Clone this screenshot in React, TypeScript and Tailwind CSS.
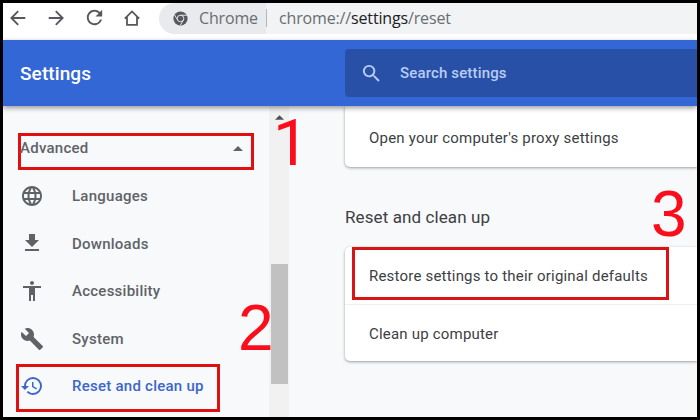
import React from "react";
import {
  MdAccessibility,
  MdBuild,
  MdHistory,
  MdLanguage,
  MdRefresh,
  MdSearch,
} from "react-icons/md";

function DownloadIcon({ className = "" }: { className?: string }) {
  return (
    <svg viewBox="0 0 24 24" className={className} fill="currentColor">
      <path d="M19 9h-4V3H9v6H5l7 7 7-7zM5 18v2h14v-2H5z" />
    </svg>
  );
}

const navItems = [
  { label: "Languages", icon: MdLanguage },
  { label: "Downloads", icon: DownloadIcon },
  { label: "Accessibility", icon: MdAccessibility },
  { label: "System", icon: MdBuild },
  { label: "Reset and clean up", icon: MdHistory, active: true },
];

function ArrowIcon({ className = "" }: { className?: string }) {
  return (
    <svg
      viewBox="0 0 16 16"
      className={`h-4 w-4 shrink-0 ${className}`}
      fill="none"
      stroke="#55585c"
      strokeWidth="1.9"
    >
      <path d="M15.3 8H1.5M8.2 1.2L1.4 8l6.8 6.8" />
    </svg>
  );
}

function HomeIcon() {
  return (
    <svg
      viewBox="0 0 16 16"
      className="ml-[18px] h-4 w-4 shrink-0"
      fill="none"
      stroke="#55585c"
      strokeWidth="1.8"
    >
      <path d="M.8 8.6L8 1.4l7.2 7.2M3 6.8v8.1h10V6.8" />
    </svg>
  );
}

function ChromeIcon() {
  return (
    <svg viewBox="0 0 16 16" className="h-[15px] w-[15px] shrink-0">
      <circle cx="8" cy="8" r="7.6" fill="#55585c" />
      <g fill="none" stroke="#e8eaed" strokeWidth="1">
        <circle cx="8" cy="8" r="3.5" />
        <path d="M8 4.5h7M5 9.8L1.5 3.8M11 9.8L7.5 15.8" />
      </g>
    </svg>
  );
}

function Toolbar() {
  return (
    <div className="flex h-[37px] shrink-0 bg-white">
      <div className="flex h-[29px] w-[156px] shrink-0 items-center">
        <ArrowIcon className="ml-[7px]" />
        <ArrowIcon className="ml-[22px] rotate-180" />
        <MdRefresh className="ml-[19px] h-[23px] w-[23px] shrink-0 text-[#55585c]" />
        <HomeIcon />
      </div>
      <div className="flex h-[31px] flex-1 items-center overflow-hidden rounded-l-full bg-[#f1f3f4] font-['Open_Sans',sans-serif] text-[16px] tracking-[-0.15px] text-[#6a6d71]">
        <div className="flex h-full w-[107px] items-center rounded-l-full bg-[#e8eaed] pl-[14px]">
          <ChromeIcon />
          <span className="ml-[11px] -mt-[2px]">Chrome</span>
        </div>
        <div className="-mt-[2px] h-[18px] w-px bg-[#b4b7ba]" />
        <span className="ml-[12px] -mt-[2px] whitespace-nowrap">
          chrome://<span className="text-[#202124]">settings</span>/reset
        </span>
      </div>
    </div>
  );
}

function Header() {
  return (
    <header className="relative z-10 flex h-[66px] shrink-0 items-center bg-[#3367d6] shadow-[0_2px_5px_rgba(0,0,0,0.4)]">
      <h1 className="w-[342px] pl-[17px] pt-[2px] text-[19px] font-medium tracking-[0.1px] text-white">
        Settings
      </h1>
      <div className="flex h-[48px] flex-1 items-center rounded-l-sm bg-[#2850a7] text-[#b8cdf5]">
        <MdSearch className="ml-[15px] h-[23px] w-[23px]" />
        <span className="ml-[17px] text-[15px] font-medium tracking-[0.15px]">Search settings</span>
      </div>
    </header>
  );
}

function Sidebar() {
  return (
    <nav className="w-[266px] shrink-0 pt-[27px] text-[15px] font-medium tracking-[0.25px] text-[#5f6368]">
      <div className="ml-[15px] flex h-[37px] w-[236px] items-center justify-between border-[3px] border-[#e01010] pr-[8px] pb-[6px]">
        <span className="-ml-px">Advanced</span>
        <svg viewBox="0 0 10 5" className="h-[5px] w-[10px]">
          <path d="M0 5L5 0l5 5z" fill="#5f6368" />
        </svg>
      </div>
      <ul className="mt-[2px]">
        {navItems.map(({ label, icon: Icon, active }) => (
          <li
            key={label}
            className={`flex h-[47.6px] items-center pl-[17px] ${active ? "text-[#3b66cc]" : ""}`}
          >
            <Icon className="h-6 w-6" />
            <span className="ml-[28px] pt-px">{label}</span>
          </li>
        ))}
      </ul>
    </nav>
  );
}

function Scrollbar() {
  return (
    <div className="flex w-[20px] shrink-0 flex-col items-center bg-[#f1f1f1] pt-[9px]">
      <svg viewBox="0 0 10 5" className="h-[5px] w-[9px]">
        <path d="M0 5L5 0l5 5z" fill="#505050" />
      </svg>
      <div className="mt-[144px] h-[120px] w-[17px] bg-[#c1c1c1]" />
    </div>
  );
}

function Content() {
  return (
    <main className="flex-1 pl-[56px] text-[15px] tracking-[0.2px] text-[#3c4043]">
      <section className="flex h-[61px] items-center rounded-bl-[5px] bg-white pl-[24px] pt-[3px] shadow-[0_1px_3px_rgba(60,64,67,0.5)]">
        Open your computer&apos;s proxy settings
      </section>
      <h2 className="mt-[38px] h-[24px] text-[17px] leading-[24px] tracking-[0.1px]">
        Reset and clean up
      </h2>
      <section className="mt-[18px] rounded-l-[5px] bg-white shadow-[0_1px_3px_rgba(60,64,67,0.5)]">
        <div className="flex h-[58px] items-center border-b border-[#eeeeee] pl-[24px] pt-[2px]">
          Restore settings to their original defaults
        </div>
        <div className="flex h-[56px] items-center pl-[24px] pt-[2px]">Clean up computer</div>
      </section>
    </main>
  );
}

export default function App() {
  return (
    <div className="relative flex h-[420px] w-[700px] flex-col overflow-hidden border-[3px] border-black bg-[#f8f9fb] font-[Roboto,sans-serif]">
      <Toolbar />
      <Header />
      <div className="flex min-h-0 flex-1 overflow-hidden">
        <Sidebar />
        <Scrollbar />
        <Content />
      </div>

      {/* Step markers */}
      <div className="absolute left-[13px] top-[361px] h-[48px] w-[204px] border-[3px] border-[#e01010]" />
      <div className="absolute left-[349px] top-[244px] h-[53px] w-[317px] border-[3px] border-[#d81414]" />
      <div className="font-['Liberation_Sans',sans-serif] text-[64px] leading-[64px] text-[#fb0d1b]">
        <span className="absolute left-[270px] top-[109px] font-[Roboto,sans-serif]">1</span>
        <span className="absolute left-[235px] top-[293px]">2</span>
        <span className="absolute left-[648px] top-[179px]">3</span>
      </div>
    </div>
  );
}
